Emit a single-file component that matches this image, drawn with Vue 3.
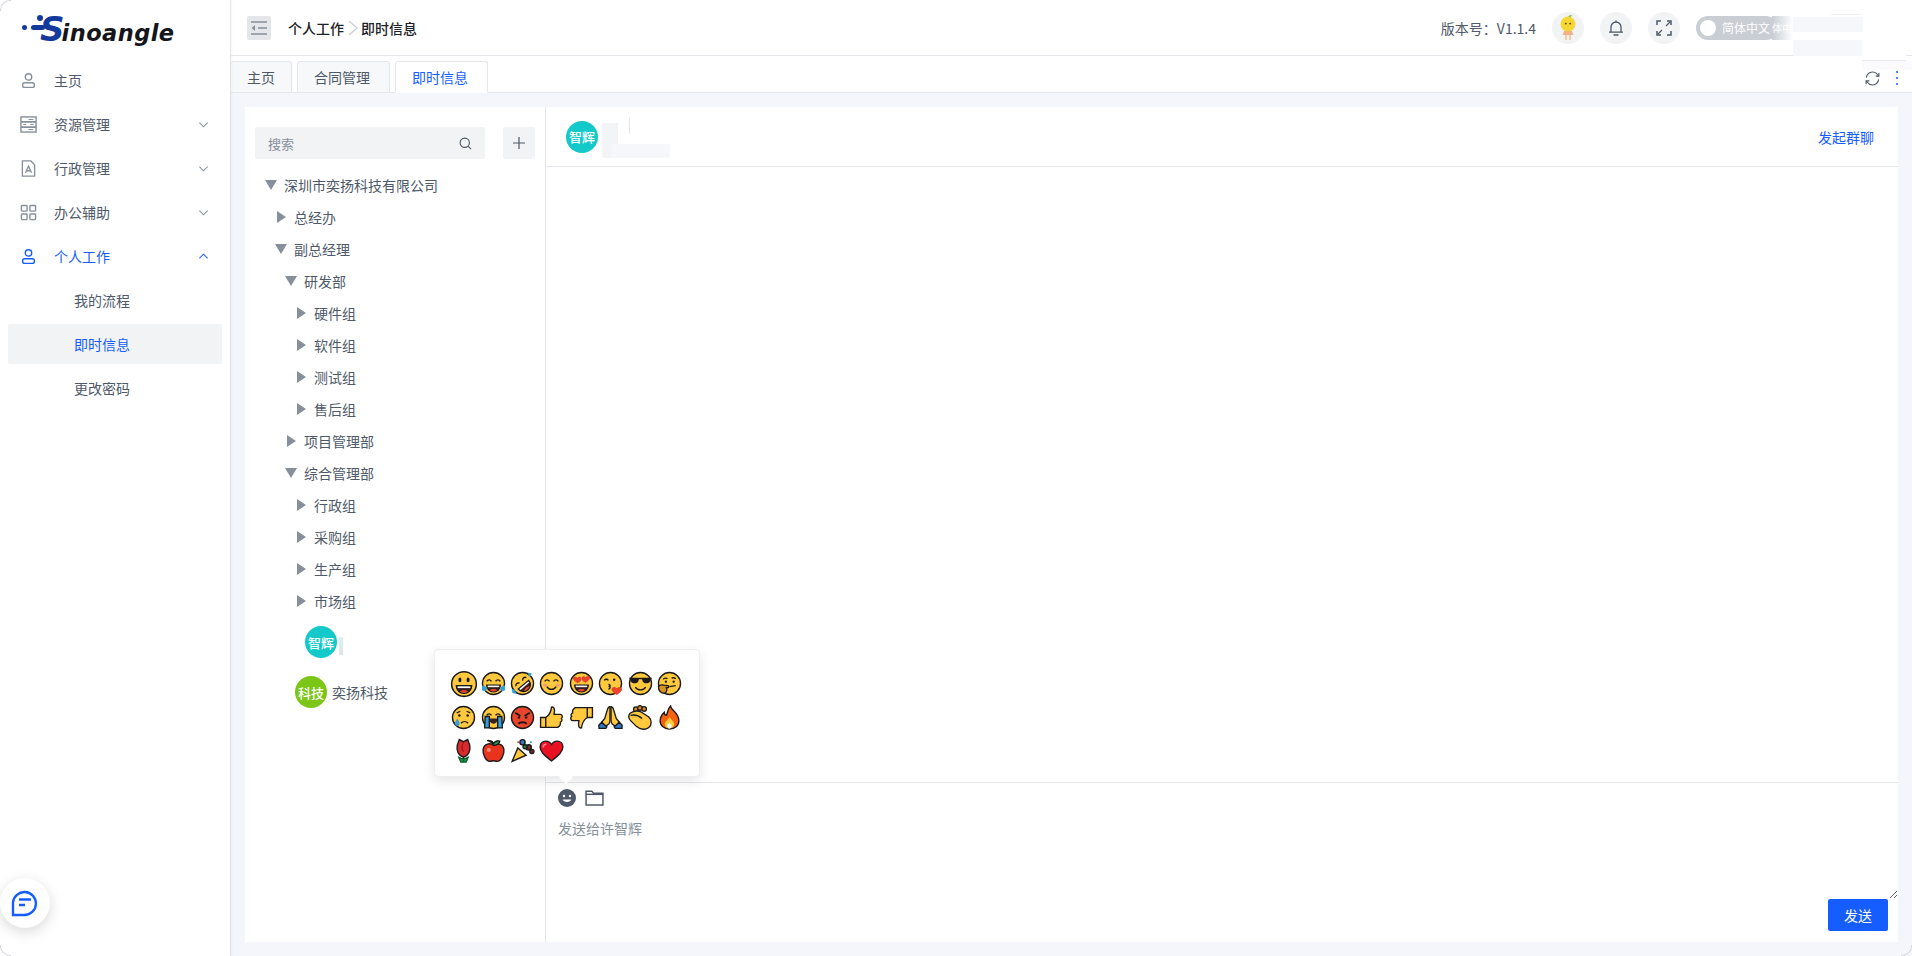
<template>
  <div class="page">
    <aside class="sidebar">
      <div class="logo">
        <i class="logo-dot d1"></i>
        <i class="logo-dot d2"></i>
        <i class="logo-bar"></i>
        <span class="logo-s">S</span><span class="logo-rest">inoangle</span>
      </div>
      <nav class="menu">
        <div class="menu-item">
          <svg class="menu-icon" viewBox="0 0 18 18" fill="none" stroke="currentColor" stroke-width="1.5"><circle cx="9" cy="5.2" r="3.4" /><rect x="2.8" y="11.3" width="12.4" height="5" rx="2" /></svg>
          <span>主页</span>
        </div>
        <div class="menu-item">
          <svg class="menu-icon" viewBox="0 0 18 18" fill="none" stroke="currentColor" stroke-width="1.5"><rect x="1" y="1" width="16" height="16" /><path d="M1 6.300h16M1 11.700h16" stroke-width="1.800" /><path d="M9 3.700h5M3.500 9h3M11 9h3.500M9 14.400h5" stroke-width="1.100" /></svg>
          <span>资源管理</span>
          <svg class="chevron" viewBox="0 0 12 12" fill="none" stroke="currentColor" stroke-width="1.1"><path d="M1.5 4l4.5 4.5L10.5 4" /></svg>
        </div>
        <div class="menu-item">
          <svg class="menu-icon" viewBox="0 0 18 18" fill="none" stroke="currentColor" stroke-width="1.4"><path d="M2.5 1h9l4 4v12h-13z" /><path d="M5.8 13.5L9 6.5l3.2 7M6.8 11.4h4.4" /></svg>
          <span>行政管理</span>
          <svg class="chevron" viewBox="0 0 12 12" fill="none" stroke="currentColor" stroke-width="1.1"><path d="M1.5 4l4.5 4.5L10.5 4" /></svg>
        </div>
        <div class="menu-item">
          <svg class="menu-icon" viewBox="0 0 18 18" fill="none" stroke="currentColor" stroke-width="1.5"><rect x="1.5" y="1.5" width="6" height="6" rx=".8" /><rect x="10.5" y="1.5" width="6" height="6" rx=".8" /><rect x="1.5" y="10.5" width="6" height="6" rx=".8" /><rect x="10.5" y="10.5" width="6" height="6" rx=".8" /></svg>
          <span>办公辅助</span>
          <svg class="chevron" viewBox="0 0 12 12" fill="none" stroke="currentColor" stroke-width="1.1"><path d="M1.5 4l4.5 4.5L10.5 4" /></svg>
        </div>
        <div class="menu-item active">
          <svg class="menu-icon" viewBox="0 0 18 18" fill="none" stroke="currentColor" stroke-width="1.5"><circle cx="9" cy="5.2" r="3.4" /><rect x="2.8" y="11.3" width="12.4" height="5" rx="2" /></svg>
          <span>个人工作</span>
          <svg class="chevron" viewBox="0 0 12 12" fill="none" stroke="currentColor" stroke-width="1.1"><path d="M1.5 8l4.5-4.5L10.5 8" /></svg>
        </div>
        <div class="menu-sub">我的流程</div>
        <div class="menu-sub current">即时信息</div>
        <div class="menu-sub">更改密码</div>
      </nav>
      <div class="chat-fab">
        <svg viewBox="0 0 28 28" width="28" height="28" fill="none" stroke="#165dff" stroke-width="2.4"><path d="M2 26V13.5a11.5 11.5 0 1 1 11.5 12.5z" /><path d="M8 10.5h12M8 16h6" /></svg>
      </div>
    </aside>

    <div class="main">
      <header class="topbar">
        <div class="toggler">
          <svg viewBox="0 0 18 18" width="18" height="18" fill="none" stroke="#86909c" stroke-width="1.5"><path d="M1 3h16M8 9h9M1 15h16" /><path d="M5 6L1.6 9 5 12z" fill="#86909c" stroke="none" /></svg>
        </div>
        <div class="crumb">
          <span>个人工作</span>
          <svg viewBox="0 0 10 16" width="10" height="16" fill="none" stroke="#c9cdd4" stroke-width="1.2"><path d="M1 1l8 7-8 7" /></svg>
          <span>即时信息</span>
        </div>
        <div class="top-right">
          <span class="version">版本号：V1.1.4</span>
          <div class="round">
            <svg viewBox="0 0 20 28" width="20" height="28">
              <path d="M10 3c1-2 3-2 4-2-1 2-2 3-4 3z" fill="#8cbf3f" />
              <circle cx="10" cy="10" r="7.500" fill="#f6d731" />
              <circle cx="7.8" cy="9.6" r=".9" fill="#5a3a1a" />
              <circle cx="12.2" cy="9.6" r=".9" fill="#5a3a1a" />
              <path d="M6 17h8l1.5 4h-11z" fill="#f4b183" />
              <path d="M8 21v5M12 21v5" stroke="#eec39a" stroke-width="1.6" />
            </svg>
          </div>
          <div class="round">
            <svg viewBox="0 0 16 16" width="16" height="16" fill="none" stroke="#4e5969" stroke-width="1.3"><path d="M3 12V7a5 5 0 0 1 10 0v5" /><path d="M1 12.2h14M5.5 15h5M8 .5v1.5" /></svg>
          </div>
          <div class="round">
            <svg viewBox="0 0 16 16" width="16" height="16" fill="none" stroke="#4e5969" stroke-width="1.5"><path d="M1 5V1h4M11 1h4v4M15 11v4h-4M5 15H1v-4" /><path d="M10 6l4-4M6 10l-4 4" stroke-width="1.2" /></svg>
          </div>
          <div class="lang-switch">
            <i class="knob"></i>
            <span>简体中文</span>
          </div>
        </div>
        <div class="smudge-top">
          <i class="st-fade"><span>体中</span></i>
          <i class="st-a"></i>
          <i class="st-b"></i>
          <i class="st-c"></i>
          <i class="st-d"></i>
          <i class="st-e"></i>
        </div>
      </header>

      <div class="tabs">
        <div v-for="tab in tabs" :key="tab" class="tab" :class="{ on: tab === '即时信息' }">{{ tab }}</div>
        <div class="tab-tools">
          <svg viewBox="0 0 16 16" width="15" height="15" fill="none" stroke="#4e5969" stroke-width="1.2"><path d="M1.5 7a6.6 6.6 0 0 1 12-3l1 1.5" /><path d="M14.5 9a6.6 6.6 0 0 1-12 3l-1-1.5" /><path d="M14.8 2v3.5h-3.4M1.2 14v-3.5h3.4" /></svg>
          <div class="dots"><i></i><i></i><i></i></div>
        </div>
      </div>

      <section class="content">
        <div class="panel">
          <div class="contacts">
            <div class="search-row">
              <div class="search">
                <span>搜索</span>
                <svg viewBox="0 0 14 14" width="13" height="13" fill="none" stroke="#4e5969" stroke-width="1.2"><circle cx="6.2" cy="6.2" r="5" /><path d="M10 10l3 3" /></svg>
              </div>
              <div class="add-btn">
                <svg viewBox="0 0 12 12" width="12" height="12" stroke="#4e5969" stroke-width="1.2"><path d="M6 0v12M0 6h12" /></svg>
              </div>
            </div>
            <div class="tree">
              <div v-for="row in treeRows" :key="row.name" class="tree-row" :style="{ paddingLeft: 20 + row.level * 10 + 'px' }">
                <i :class="row.open ? 'caret-down' : 'caret-right'"></i>
                <span>{{ row.name }}</span>
              </div>
              <div class="leaf leaf-a">
                <div class="avatar teal">智辉</div>
                <i class="leaf-smudge"></i>
              </div>
              <div class="leaf leaf-b">
                <div class="avatar green">科技</div>
                <span>奕扬科技</span>
              </div>
            </div>
          </div>

          <div class="chat">
            <div class="chat-head">
              <div class="avatar teal">智辉</div>
              <i class="head-smudge s1"></i>
              <i class="head-smudge s2"></i>
              <i class="head-smudge s3"></i>
              <a class="group-link">发起群聊</a>
            </div>
            <div class="messages"></div>
            <div class="composer">
              <div class="emoji-pop">
                <svg
                  v-for="e in emojis"
                  :key="e.id"
                  class="emoji"
                  :class="{ big: e.id === 'grin' }"
                  viewBox="0 0 24 24"
                  v-html="e.svg"
                ></svg>
              </div>
              <div class="tools">
                <svg viewBox="0 0 18 18" width="18" height="18"><circle cx="9" cy="9" r="9" fill="#4e5969" /><circle cx="6" cy="7" r="1.2" fill="#fff" /><circle cx="12" cy="7" r="1.2" fill="#fff" /><path d="M4.6 10.5c1 3.2 7.800 3.200 8.800 0z" fill="#fff" /></svg>
                <svg viewBox="0 0 18 16" width="19" height="17" fill="none" stroke="#4e5969" stroke-width="1.4"><path d="M1 2h5.500l1.500 2h9v11H1z" /><path d="M1 5h16" /></svg>
              </div>
              <textarea class="input" placeholder="发送给许智辉"></textarea>
              <div class="send-row">
                <button class="send">发送</button>
              </div>
            </div>
          </div>
        </div>
      </section>
    </div>

    <i class="corner tl"></i>
    <i class="corner bl"></i>
    <i class="corner br"></i>
  </div>
</template>

<script setup>
const tabs = ['主页', '合同管理', '即时信息']

const treeRows = [
  { name: '深圳市奕扬科技有限公司', level: 0, open: true },
  { name: '总经办', level: 1 },
  { name: '副总经理', level: 1, open: true },
  { name: '研发部', level: 2, open: true },
  { name: '硬件组', level: 3 },
  { name: '软件组', level: 3 },
  { name: '测试组', level: 3 },
  { name: '售后组', level: 3 },
  { name: '项目管理部', level: 2 },
  { name: '综合管理部', level: 2, open: true },
  { name: '行政组', level: 3 },
  { name: '采购组', level: 3 },
  { name: '生产组', level: 3 },
  { name: '市场组', level: 3 },
]

const ink = 'stroke="#1a1a1a" stroke-width="1.3"'
const face = (fill = '#ffc83d') => `<circle cx="12" cy="12" r="10.6" fill="${fill}" ${ink}/>`
const arcEyes = `<path d="M5.500 10c1-2 3.500-2 4.500 0M14 10c1-2 3.500-2 4.500 0" fill="none" ${ink}/>`
const bigMouth = `<path d="M5.500 13.500h13c0 4-3 6.500-6.500 6.500s-6.500-2.500-6.500-6.500z" fill="#3a2020" ${ink}/><path d="M6.500 14h11v1.500h-11z" fill="#fff"/><path d="M8.500 18.500c2-1.500 5-1.500 7 0-2 1.500-5 1.500-7 0z" fill="#e8452c"/>`

const emojis = [
  { id: 'grin', svg: `${face()}<ellipse cx="8.500" cy="8.500" rx="1.300" ry="2" fill="#1a1a1a"/><ellipse cx="15.500" cy="8.500" rx="1.300" ry="2" fill="#1a1a1a"/>${bigMouth}` },
  { id: 'joy', svg: `${face()}${arcEyes}${bigMouth}<path d="M1 14c2 0 4 1 4.500 3 0 2-3 3-4.500 1.500z" fill="#2f9fe0"/><path d="M23 14c-2 0-4 1-4.500 3 0 2 3 3 4.500 1.500z" fill="#2f9fe0"/>` },
  { id: 'rofl', svg: `${face()}<g transform="rotate(-40 12 12)">${arcEyes}${bigMouth}</g><path d="M17 1.500l4 1-2 4z" fill="#2f9fe0"/><path d="M1.500 17l1 4 4 1-2-4z" fill="#2f9fe0"/>` },
  { id: 'smile', svg: `${face()}${arcEyes}<ellipse cx="6" cy="13.500" rx="2" ry="1.500" fill="#f4a07a"/><ellipse cx="18" cy="13.500" rx="2" ry="1.500" fill="#f4a07a"/><path d="M7.500 15c2 3.500 7 3.500 9 0" fill="none" ${ink}/>` },
  { id: 'hearts', svg: `${face()}<path d="M8 11.500C4 9 3.500 7.500 4 6.300s3-1.300 4 .5c1-1.800 3.500-1.700 4 .5.300 1.700-1 3-4 4.700z" fill="#e8452c"/><path d="M16 11.500c-3-1.700-4.300-3-4-4.700.5-2.200 3-2.300 4-.5 1-1.800 3.500-1.700 4-.5s0 2.700-4 5.700z" fill="#e8452c"/>${bigMouth}` },
  { id: 'kiss', svg: `${face()}<path d="M6 9c1-1.500 3-1.500 4 0" fill="none" ${ink}/><circle cx="15.500" cy="8.500" r="1.200" fill="#1a1a1a"/><path d="M10 13c2 0 2 1.500 1 2 1 .5 1 2-1 2.500" fill="none" ${ink}/><path d="M18 23c-3-2-5-3.500-5-5.500s3-3 5-1c2-2 5-1 5 1s-2 3.500-5 5.500z" fill="#e8452c"/>` },
  { id: 'cool', svg: `${face()}<path d="M1 6.500h22l-1.500 3c-1 3-7 3-7.500 0l-.5-1.500h-3l-.5 1.500c-.5 3-6.500 3-7.500 0z" fill="#1a1a1a"/><path d="M7 15.500c2 3.500 8 3.500 10 0" fill="none" ${ink}/>` },
  { id: 'think', svg: `${face()}<path d="M6 8c1-1.500 3-1.500 4-.5M14 7c1-.8 3-.8 4 .5" fill="none" ${ink}/><circle cx="8.500" cy="10.300" r="1.100" fill="#1a1a1a"/><circle cx="16" cy="10.300" r="1.100" fill="#1a1a1a"/><path d="M12 15l6-1" fill="none" ${ink}/><path d="M1.500 15c1-1.500 3-2 5-1.500l4 .5c1 .5 1 2 0 2l-1.500.2c1 1.300.5 4-1.500 5-3 .5-6.500-2-6-6.200z" fill="#d89220" ${ink}/>` },
  { id: 'sad', svg: `${face()}<circle cx="8" cy="10" r="1.200" fill="#1a1a1a"/><circle cx="16" cy="10" r="1.200" fill="#1a1a1a"/><path d="M5.500 7.500L9 6M18.500 7.500L15 6M9.500 17.500c2-2 5-2 7 0" fill="none" ${ink}/><path d="M6 13c1.200 2 2.200 3.500 2.200 5a2.200 2.200 0 0 1-4.400 0c0-1.500 1-3 2.200-5z" fill="#2f9fe0"/>` },
  { id: 'sob', svg: `${face()}${arcEyes}<path d="M8 13h8c0 3-1.500 5-4 5s-4-2-4-5z" fill="#3a2020"/><path d="M4 11h4v11H3.500zM16 11h4l.5 11H16z" fill="#2f9fe0" ${ink}/>` },
  { id: 'angry', svg: `${face('#e8452c')}<path d="M5 7.500l5 3M19 7.500l-5 3" fill="none" stroke="#1a1a1a" stroke-width="1.800"/><circle cx="8.500" cy="12" r="1.200" fill="#1a1a1a"/><circle cx="15.500" cy="12" r="1.200" fill="#1a1a1a"/><path d="M8 18c2-2 6-2 8 0" fill="none" stroke="#1a1a1a" stroke-width="1.800"/>` },
  { id: 'up', svg: `<path d="M1.500 12h5v9.500h-5z" fill="#ffc83d" ${ink}/><path d="M6.500 12c3-2 5-5 5.500-10 2.500-.5 3.500 2 2.500 7h6c2 0 2.500 3 1 4 1 1 .5 3-1 3.500.5 2-1 4-2.500 5H6.500z" fill="#ffc83d" ${ink}/>` },
  { id: 'down', svg: `<g transform="rotate(180 12 12)"><path d="M1.500 12h5v9.500h-5z" fill="#ffc83d" ${ink}/><path d="M6.500 12c3-2 5-5 5.500-10 2.500-.5 3.500 2 2.500 7h6c2 0 2.500 3 1 4 1 1 .5 3-1 3.500.5 2-1 4-2.500 5H6.500z" fill="#ffc83d" ${ink}/></g>` },
  { id: 'pray', svg: `<path d="M11.500 1.500c-1.500 0-2 1-2.500 3L6.500 13l-3 3.500 4 4 3-2.500c1-1 1-2 1-3.500z" fill="#ffc83d" ${ink}/><path d="M12.500 1.500c1.500 0 2 1 2.500 3l2.500 8.500 3 3.500-4 4-3-2.500c-1-1-1-2-1-3.500z" fill="#ffc83d" ${ink}/><path d="M.8 19.500l2.700-3 5 4.500-1 1.500H1z" fill="#2f78c8" ${ink}/><path d="M23.200 19.500l-2.700-3-5 4.500 1 1.500H23z" fill="#2f78c8" ${ink}/>` },
  { id: 'clap', svg: `<circle cx="7.500" cy="4" r="2.200" fill="#e08a1e" ${ink}/><circle cx="11.500" cy="2.800" r="2.200" fill="#e08a1e" ${ink}/><circle cx="15.500" cy="3.800" r="2.200" fill="#e08a1e" ${ink}/><path d="M2 8c3-2.500 8-3 11-1l7 4.500c3 3 3 7.500 0 10-3 2.500-8 2.500-12-1L2.500 15c-2-2-2.500-5-.5-7z" fill="#ffc83d" ${ink}/><path d="M2.500 10c3.500-1 7-.5 11 3" fill="none" ${ink}/>` },
  { id: 'fire', svg: `<path d="M13 1c0 4 8 6 8 14 0 5-4 8-9 8s-9-3-9-8c0-4 2-6 4-8 0 2 .5 3 2 3 1.500-3 1-6 4-9z" fill="#f7630c" ${ink}/><path d="M12 11.500c.8 2 4.500 4 4.500 6.800 0 2.700-2 4.200-4.500 4.200s-4.500-1.500-4.500-4c0-3 3.500-4 4.500-7z" fill="#ffc83d"/><path d="M12 17c.5 1 2 1.800 2 3.200 0 1.300-.9 2.300-2 2.300s-2-1-2-2.300c0-1.500 1.500-2 2-3.200z" fill="#fff"/>` },
  { id: 'rose', svg: `<path d="M12 16v7M7.500 18.500l4.500 2 4.500-2-2 4.500h-5z" fill="#16a34a" stroke="#0f5c2c" stroke-width="1.300"/><path d="M6 7l2-5.500 4 2 4-2 2 5.500c1 5-1 10-6 11.500C7 17 5 12 6 7z" fill="#d92b2b" ${ink}/><path d="M12 4c-2 3-2 7 0 9" fill="none" stroke="#8e1616" stroke-width="1"/>` },
  { id: 'apple', svg: `<path d="M12 7c-3-2.500-9-2-10 4-.7 5 3 11.500 6.500 11.500 1.500 0 2.500-.7 3.500-.7s2 .7 3.500.7C19 22.500 22.700 16 22 11c-1-6-7-6.500-10-4z" fill="#e8341c" ${ink}/><path d="M12 7c-1-2-3-4-6-4.500C8 2 11 3 12 5c2-2.500 5-2.500 6-2-.5 2.500-3 4-6 4z" fill="#16a34a" ${ink}/><circle cx="7.500" cy="11.500" r="2" fill="#f58a7a"/>` },
  { id: 'popper', svg: `<path d="M2 22.500L7.500 9.500l8 7z" fill="#ffc83d" ${ink}/><circle cx="12" cy="4" r="2.500" fill="#2f78c8" ${ink}/><circle cx="18" cy="9" r="2.500" fill="#7a2a2a" ${ink}/><circle cx="14.500" cy="8.500" r="2" fill="#2a7a4a" ${ink}/><circle cx="21" cy="13" r="2" fill="#7a2a2a" ${ink}/><circle cx="8" cy="4" r="1" fill="#e8341c"/><circle cx="20" cy="4" r="1" fill="#2f9fe0"/>` },
  { id: 'heart', svg: `<path d="M12 22C5 16.500 1 13 1 8.500 1 5 3.500 3 6.500 3 8.800 3 11 4.300 12 6.300 13 4.300 15.200 3 17.500 3 20.500 3 23 5 23 8.500 23 13 19 16.500 12 22z" fill="#e81224" ${ink}/><path d="M4 9c0-2 1-3 3-3.300" fill="none" stroke="#f58a8a" stroke-width="1.500"/>` },
]
</script>

<style scoped>
.page {
  position: relative;
  display: flex;
  width: 100vw;
  height: 100vh;
  overflow: hidden;
  background: #fff;
  font-family: "Noto Sans CJK SC", "Liberation Sans", sans-serif;
  font-size: 14px;
  color: #4e5969;
}

.sidebar {
  position: relative;
  width: 230px;
  flex: none;
  border-right: 1px solid #e5e6eb;
  box-shadow: 1px 0 2px rgba(0, 0, 0, 0.04);
}

.logo {
  position: relative;
  height: 58px;
  padding: 12px 0 0 40px;
  box-sizing: border-box;
  white-space: nowrap;
  line-height: 34px;
  font-family: "DejaVu Sans", sans-serif;
  font-style: italic;
  font-weight: 700;
}
.logo-s {
  font-size: 34px;
  color: #123a9c;
  letter-spacing: -3px;
}
.logo-rest {
  font-size: 22.5px;
  color: #15151c;
  letter-spacing: 0.45px;
}
.logo-dot {
  position: absolute;
  border-radius: 50%;
  background: #123a9c;
}
.d1 { left: 22px; top: 25px; width: 5px; height: 5px; }
.d2 { left: 37px; top: 15px; width: 6px; height: 6px; }
.logo-bar {
  position: absolute;
  left: 31px;
  top: 25px;
  width: 14px;
  height: 5px;
  border-radius: 3px;
  background: #123a9c;
}

.menu {
  display: flex;
  flex-direction: column;
}
.menu-item {
  display: flex;
  align-items: center;
  height: 44px;
  padding: 0 16px 0 20px;
  color: #4e5969;
}
.menu-item.active {
  color: #165dff;
}
.menu-icon {
  width: 17px;
  height: 17px;
  flex: none;
  margin-right: 17px;
  color: #86909c;
}
.active .menu-icon {
  color: #165dff;
}
.chevron {
  width: 11px;
  height: 11px;
  margin-left: auto;
  margin-right: 5px;
  color: #86909c;
}
.active .chevron {
  color: #165dff;
}
.menu-sub {
  display: flex;
  align-items: center;
  flex: none;
  height: 40px;
  margin: 2px 8px;
  padding-left: 66px;
  border-radius: 2px;
}
.menu-sub.current {
  background: #f2f3f5;
  color: #165dff;
}

.chat-fab {
  position: absolute;
  left: 0;
  top: 878px;
  width: 50px;
  height: 50px;
  display: flex;
  align-items: center;
  justify-content: center;
  border-radius: 50%;
  background: #fff;
  box-shadow: 0 4px 14px rgba(0, 0, 0, 0.15);
}

.main {
  flex: 1;
  min-width: 0;
  display: flex;
  flex-direction: column;
}

.topbar {
  position: relative;
  flex: none;
  height: 55px;
  display: flex;
  align-items: center;
  padding: 0 134px 0 16px;
  border-bottom: 1px solid #e5e6eb;
}
.toggler {
  width: 24px;
  height: 24px;
  display: flex;
  align-items: center;
  justify-content: center;
  background: #e5e6eb;
  border-radius: 2px;
  margin-top: 1px;
}
.crumb {
  display: flex;
  align-items: center;
  gap: 3.5px;
  margin-left: 17px;
  color: #1d2129;
  font-weight: 500;
}
.top-right {
  margin-left: auto;
  display: flex;
  align-items: center;
  gap: 16px;
}
.round {
  width: 32px;
  height: 32px;
  display: flex;
  align-items: center;
  justify-content: center;
  border-radius: 50%;
  background: #f2f3f5;
}
.lang-switch {
  display: flex;
  align-items: center;
  width: 82px;
  height: 24px;
  box-sizing: border-box;
  padding-left: 4px;
  border-radius: 12px;
  background: #c9cdd4;
  color: #fff;
  font-size: 12px;
}
.knob {
  width: 16px;
  height: 16px;
  margin-right: 6px;
  border-radius: 50%;
  background: #fff;
  flex: none;
}

/* traces of the blurred user name in the reference */
.smudge-top i {
  position: absolute;
  display: block;
}
.st-fade {
  left: 1541px;
  top: 16px;
  width: 21px;
  height: 24px;
  background: linear-gradient(90deg, #c9cdd4, #fff);
  color: #fff;
  font-size: 10px;
  font-style: normal;
  line-height: 24px;
  white-space: nowrap;
}
.st-a {
  left: 1562px;
  top: 17px;
  width: 70px;
  height: 39px;
  background: #f6f7fb;
}
.st-b {
  left: 1562px;
  top: 32px;
  width: 112px;
  height: 8px;
  background: #fff;
}
.st-c {
  left: 1631px;
  top: 35px;
  width: 44px;
  height: 25px;
  background: #fff;
  border-bottom: 1px solid #e8e9f0;
  z-index: 2;
}
.st-d {
  left: 1631px;
  top: 61px;
  width: 50px;
  height: 9px;
  background: #fbfbfe;
}
.st-e {
  left: 1600px;
  top: 14px;
  width: 30px;
  height: 1px;
  background: #eeeff2;
}

.tabs {
  flex: none;
  height: 37px;
  box-sizing: border-box;
  display: flex;
  align-items: flex-end;
  gap: 5px;
  border-bottom: 1px solid #e5e6eb;
}
.tab {
  height: 32px;
  box-sizing: border-box;
  padding: 0 19px 0 16px;
  margin-bottom: -1px;
  display: flex;
  align-items: center;
  background: #f7f8fa;
  border: 1px solid #e5e6eb;
  border-radius: 3px 3px 0 0;
  color: #4e5969;
}
.tab:first-child {
  border-left: 0;
  padding-right: 16px;
}
.tab.on {
  background: #fff;
  border-bottom-color: #fff;
  color: #165dff;
}
.tab-tools {
  margin-left: auto;
  align-self: center;
  display: flex;
  align-items: center;
  gap: 16px;
  padding-right: 14px;
  margin-top: 8px;
}
.dots {
  display: flex;
  flex-direction: column;
  gap: 3.5px;
}
.dots i {
  display: block;
  width: 2.5px;
  height: 2.5px;
  border-radius: 50%;
  background: #165dff;
}

.content {
  flex: 1;
  min-height: 0;
  padding: 14px;
  background: #f5f6fb;
  display: flex;
}
.panel {
  flex: 1;
  min-width: 0;
  display: flex;
  background: #fff;
}

.contacts {
  width: 301px;
  flex: none;
  box-sizing: border-box;
  border-right: 1px solid #e5e6eb;
}
.search-row {
  display: flex;
  gap: 18px;
  padding: 20px 0 0 10px;
}
.search {
  width: 230px;
  height: 32px;
  box-sizing: border-box;
  padding: 0 13px;
  display: flex;
  align-items: center;
  justify-content: space-between;
  background: #f2f3f5;
  border-radius: 2px;
  font-size: 13px;
  color: #86909c;
}
.add-btn {
  width: 32px;
  height: 32px;
  display: flex;
  align-items: center;
  justify-content: center;
  background: #f2f3f5;
  border-radius: 2px;
}

.tree {
  padding-top: 10px;
}
.tree-row {
  display: flex;
  align-items: center;
  height: 32px;
  white-space: nowrap;
}
.caret-down {
  width: 0;
  height: 0;
  margin-right: 7px;
  border-left: 6px solid transparent;
  border-right: 6px solid transparent;
  border-top: 10px solid #86909c;
}
.caret-right {
  width: 0;
  height: 0;
  margin-left: 2px;
  margin-right: 8px;
  border-top: 6px solid transparent;
  border-bottom: 6px solid transparent;
  border-left: 9px solid #86909c;
}
.leaf {
  position: relative;
  display: flex;
  align-items: center;
  height: 50px;
}
.leaf-a {
  padding-left: 60px;
}
.leaf-b {
  padding-left: 50px;
  gap: 5px;
}
.leaf-smudge {
  position: absolute;
  left: 94px;
  top: 20px;
  width: 4px;
  height: 18px;
  background: linear-gradient(#d8f1f2, #dfe4e6);
}
.avatar {
  width: 32px;
  height: 32px;
  flex: none;
  display: flex;
  align-items: center;
  justify-content: center;
  border-radius: 50%;
  color: #fff;
  font-size: 13px;
  font-weight: 500;
}
.teal {
  background: #14c9c9;
}
.green {
  background: #7bc616;
}

.chat {
  flex: 1;
  min-width: 0;
  display: flex;
  flex-direction: column;
}
.chat-head {
  position: relative;
  flex: none;
  height: 60px;
  box-sizing: border-box;
  display: flex;
  align-items: center;
  justify-content: space-between;
  padding: 0 24px 0 20px;
  border-bottom: 1px solid #e5e6eb;
}
.head-smudge {
  position: absolute;
}
.s1 {
  left: 56px;
  top: 16px;
  width: 16px;
  height: 35px;
  background: linear-gradient(90deg, #f4f5f6, #f2f3f5);
}
.s2 {
  left: 65px;
  top: 37px;
  width: 59px;
  height: 14px;
  background: #f6f7fb;
}
.s3 {
  left: 83px;
  top: 11px;
  width: 1px;
  height: 16px;
  background: #e5e6eb;
}
.group-link {
  color: #165dff;
}
.messages {
  flex: 1;
  min-height: 0;
}

.composer {
  position: relative;
  flex: none;
  height: 160px;
  box-sizing: border-box;
  display: flex;
  flex-direction: column;
  border-top: 1px solid #e5e6eb;
}
.tools {
  height: 29px;
  padding: 0 0 2px 12px;
  flex: none;
  display: flex;
  align-items: center;
  gap: 9px;
}
.input {
  display: block;
  width: 100%;
  height: 85px;
  box-sizing: border-box;
  flex: none;
  padding: 3px 12px;
  border: 0;
  outline: 0;
  background: #fff;
  resize: both;
  font: inherit;
  line-height: 22px;
}
.input::placeholder {
  color: #86909c;
}
.send-row {
  display: flex;
  justify-content: flex-end;
  padding-right: 10px;
}
.send {
  width: 60px;
  height: 32px;
  border: 0;
  border-radius: 2px;
  background: #165dff;
  color: #fff;
  font: inherit;
}

.emoji-pop {
  position: absolute;
  z-index: 5;
  left: -112px;
  bottom: calc(100% + 6px);
  width: 266px;
  height: 128px;
  box-sizing: border-box;
  padding: 17px 0 0 14px;
  display: grid;
  grid-template-columns: repeat(8, 29.4px);
  grid-auto-rows: 33.5px;
  align-items: center;
  justify-items: center;
  background: #fff;
  border: 1px solid #eceef2;
  border-radius: 4px;
  box-shadow: 0 4px 12px rgba(0, 0, 0, 0.1);
}
.emoji-pop::after {
  content: "";
  position: absolute;
  left: 126px;
  bottom: -6px;
  width: 10px;
  height: 10px;
  background: #fff;
  transform: rotate(45deg);
  z-index: -1;
}
.emoji {
  width: 25px;
  height: 25px;
}
.emoji.big {
  width: 28px;
  height: 28px;
}

.corner {
  position: absolute;
  width: 10px;
  height: 10px;
  border: 0 solid #d5d7dd;
  pointer-events: none;
}
.tl { left: 0; top: 0; border-width: 1px 0 0 1px; border-top-left-radius: 10px; }
.bl { left: 0; bottom: 0; border-width: 0 0 1px 1px; border-bottom-left-radius: 10px; }
.br { right: 0; bottom: 0; border-width: 0 1px 1px 0; border-bottom-right-radius: 10px; }
</style>

<style>
html,
body {
  margin: 0;
  overflow: hidden;
}
</style>
